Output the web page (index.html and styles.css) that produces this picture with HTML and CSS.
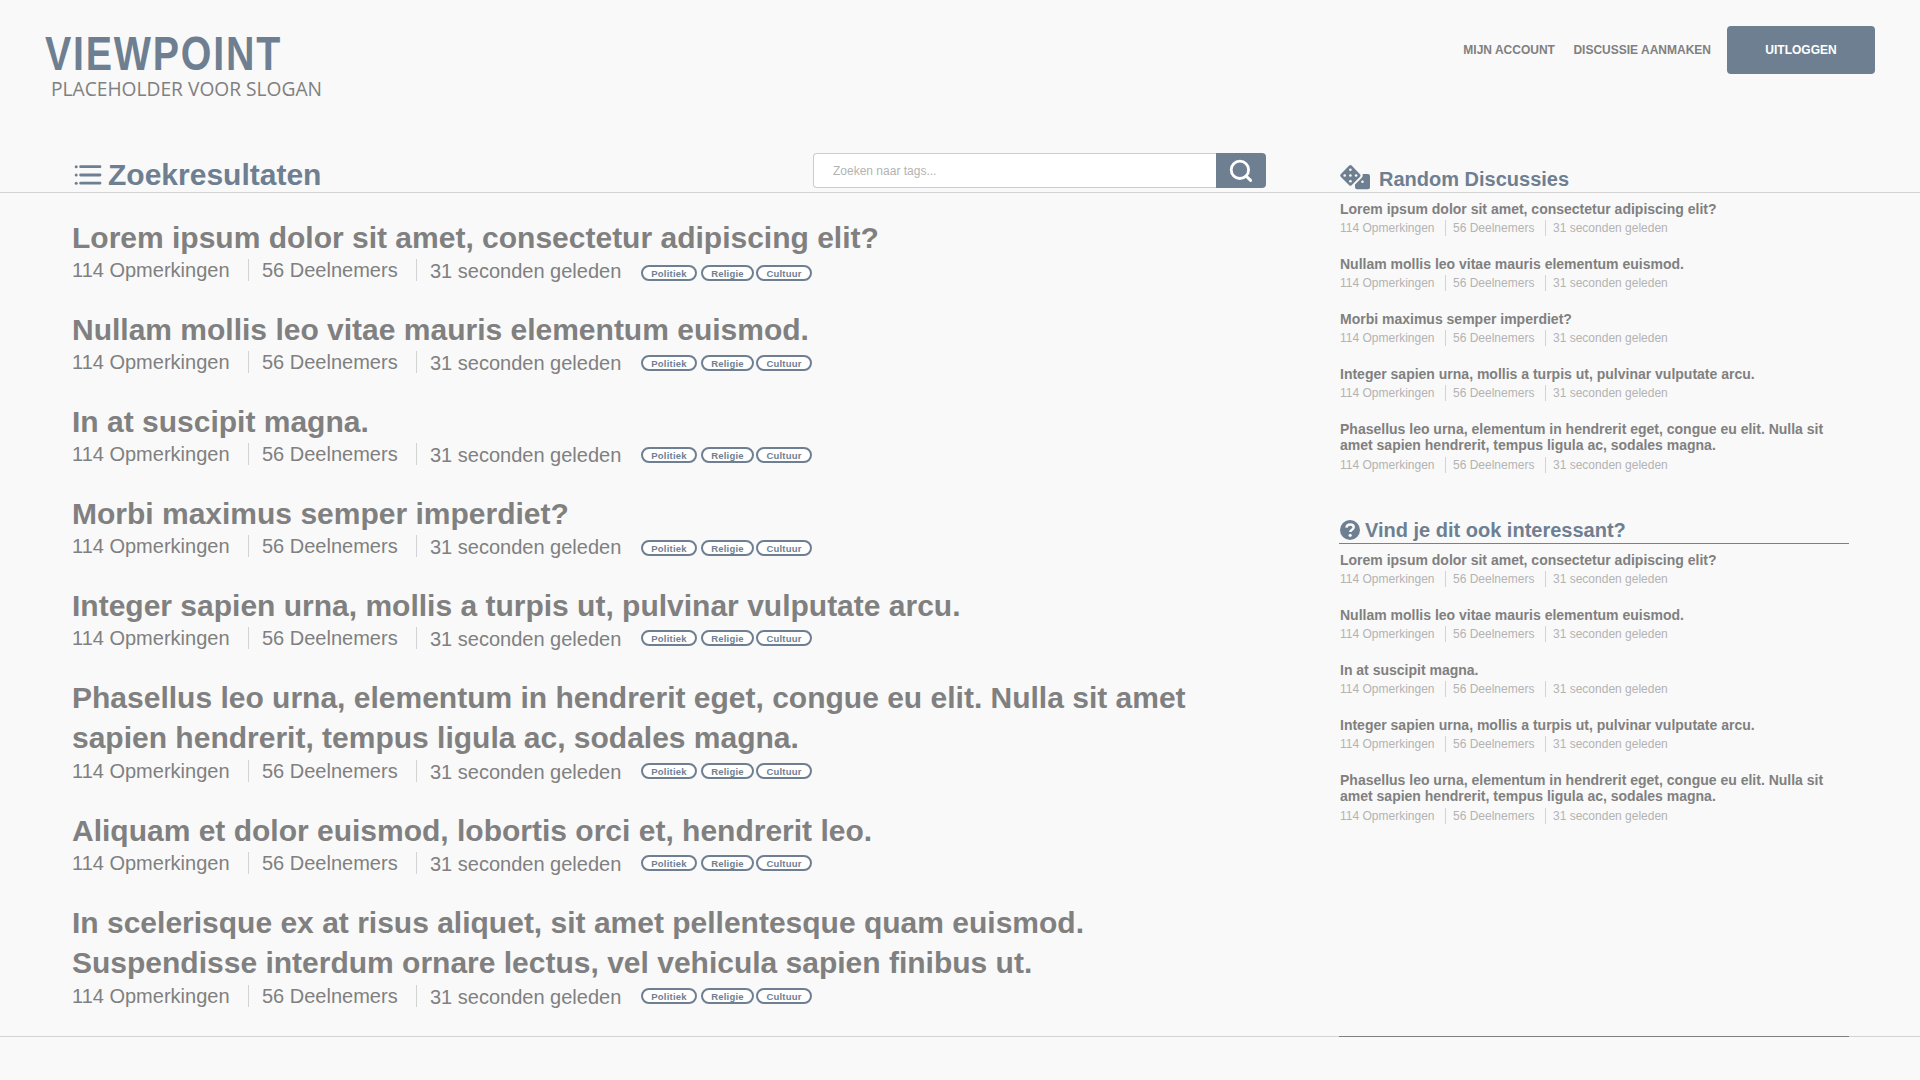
FILE: index.html
```html
<!DOCTYPE html>
<html lang="nl">
<head>
<meta charset="utf-8">
<title>Viewpoint</title>
<link rel="stylesheet" href="styles.css">
</head>
<body>
<header class="header">
  <div class="brand">
    <div class="logo">VIEWPOINT</div>
    <div class="slogan">PLACEHOLDER VOOR SLOGAN</div>
  </div>
  <nav class="nav">
    <a class="nav-link">MIJN ACCOUNT</a>
    <a class="nav-link">DISCUSSIE AANMAKEN</a>
    <a class="button">UITLOGGEN</a>
  </nav>
</header>
<div class="toolbar">
  <h1 class="page-title">
    <svg class="icon-list" viewBox="0 0 28 22" width="28" height="22"><g fill="currentColor"><circle cx="2.200" cy="2.700" r="1.500"/><circle cx="2.200" cy="11" r="1.500"/><circle cx="2.200" cy="19.200" r="1.500"/></g><path d="M6.600 2.700H26M6.600 11H26M6.600 19.200H26" stroke="currentColor" stroke-width="2.800" stroke-linecap="round"/></svg>
    Zoekresultaten
  </h1>
  <div class="search">
    <div class="search-input">Zoeken naar tags...</div>
    <div class="search-button"><svg viewBox="0 0 24 24" width="24" height="24" fill="none" stroke="#fff" stroke-width="2.8" stroke-linecap="round"><circle cx="10.9" cy="10.8" r="8.700"/><path d="M17 17l4.600 4.400" stroke-width="3"/></svg></div>
  </div>
  <h2 class="side-title random-title">
    <svg class="icon-dice" viewBox="0 0 30 25" width="30" height="25"><path fill="currentColor" d="M9.2.6Q10.4-.4 11.600.6L20 9.300Q21 10.500 20 11.700L11.600 20.200Q10.400 21.200 9.200 20.200L.7 11.700Q-.2 10.500.7 9.300ZM22.500 9H28Q30 9 30 11V22.300Q30 24.300 28 24.300H17Q15 24.300 15 22.300V19.600L21.800 12.800Q23.300 11 22.500 9Z"/><g fill="#f9f9f9"><circle cx="10.400" cy="4.800" r="1.300"/><circle cx="4.700" cy="10.500" r="1.300"/><circle cx="10.400" cy="10.500" r="1.300"/><circle cx="16.100" cy="10.500" r="1.300"/><circle cx="10.400" cy="16.200" r="1.300"/><circle cx="22.500" cy="16.700" r="1.300"/></g></svg>
    Random Discussies
  </h2>
</div>
<main class="content">
  <section class="results" id="results"></section>
  <aside class="sidebar">
    <section class="side-list" id="random"></section>
    <h2 class="side-title related-title">
      <svg class="icon-question" viewBox="0 0 20 20" width="20" height="20"><circle cx="10" cy="10" r="10" fill="currentColor"/><path d="M6.400 7.600C6.700 5.400 8.200 4.400 10.200 4.400C12.300 4.400 13.700 5.600 13.700 7.300C13.700 9.800 10.300 9.700 10.300 12" fill="none" stroke="#f9f9f9" stroke-width="2.500"/><circle cx="10.200" cy="15.300" r="1.600" fill="#f9f9f9"/></svg>
      Vind je dit ook interessant?
    </h2>
    <section class="side-list" id="related"></section>
  </aside>
</main>
<script src="script.js"></script>
</body>
</html>
```
FILE: styles.css
```css
* { box-sizing: border-box; }
body {
  margin: 0;
  width: 1920px;
  height: 1080px;
  overflow: hidden;
  background: #f9f9f9;
  color: #808080;
  font-family: "Liberation Sans", Arial, sans-serif;
}
h1, h2, h3 { margin: 0; font-weight: bold; }

.header {
  display: flex;
  justify-content: space-between;
  height: 150px;
  padding: 26px 45px 0;
}
.logo {
  height: 54px;
  color: #6e7f92;
  font-size: 48px;
  line-height: 56px;
  font-weight: bold;
  letter-spacing: 2.2px;
  transform: scaleX(.82);
  transform-origin: 0 0;
  white-space: nowrap;
  width: 0;
}
.slogan {
  padding-left: 6px;
  font-family: "Open Sans", sans-serif;
  font-size: 19.2px;
  line-height: 18px;
  white-space: nowrap;
}
.nav { display: flex; height: 48px; align-items: center; font-size: 12px; font-weight: bold; }
.nav-link { margin-right: 18.5px; }
.nav-link:nth-child(2) { margin-right: 16px; }
.button {
  width: 148px;
  border-radius: 4px;
  background: #6e7f92;
  color: #fff;
  line-height: 48px;
  text-align: center;
}

.toolbar {
  display: grid;
  grid-template-columns: 739px 527px 1fr;
  height: 43px;
  padding-left: 74px;
  border-bottom: 1px solid #d3d3d3;
}
.page-title { display: flex; color: #6e7f92; font-size: 30px; line-height: 50px; gap: 6px; }
.icon-list { margin-top: 14px; }
.search { display: flex; width: 453px; height: 35px; margin-top: 3px; }
.search-input {
  flex: 1;
  padding-left: 19px;
  border: 1px solid #ccc;
  border-right: 0;
  border-radius: 4px 0 0 4px;
  background: #fff;
  color: #b3b3b3;
  font-size: 12px;
  line-height: 34px;
}
.search-button { width: 50px; border-radius: 0 4px 4px 0; background: #6e7f92; padding: 6px 13px; }
.side-title { display: flex; color: #6e7f92; font-size: 20px; }
.random-title { gap: 9px; line-height: 58px; }
.icon-dice { margin-top: 15px; }

.content { display: flex; height: 844px; border-bottom: 1px solid #d3d3d3; }
.results { width: 1339px; padding: 25px 0 0 72px; }
.result { margin-bottom: 20px; }
.result-title { font-size: 30px; line-height: 40px; }
.result-long .result-title { padding-bottom: 1px; }
.meta { display: flex; }
.meta span + span { border-left: 1px solid #d3d3d3; }
.result .meta { height: 32px; font-size: 20px; line-height: 22px; }
.result .meta span { height: 22px; margin-top: 1px; white-space: nowrap; }
.result .meta .comments { width: 176px; }
.result .meta .members { width: 168px; padding-left: 13px; }
.result .meta .time { width: 225px; padding: 1px 0 0 13px; }
.tags { display: flex; }
.tag {
  height: 16px;
  border: 2px solid #6e7f92;
  border-radius: 8px;
  background: #fff;
  color: #6e7f92;
  font-size: 9.5px;
  font-weight: bold;
  line-height: 13px;
  letter-spacing: .2px;
  text-align: center;
}
.tag:nth-child(1) { width: 56px; margin-right: 4px; }
.tag:nth-child(2) { width: 53px; margin-right: 2px; }
.tag:nth-child(3) { width: 56px; }

.sidebar { width: 510px; height: 844px; border-bottom: 1px solid #808080; }
.side-list { padding: 8px 0 0 1px; }
.side-item { height: 35px; margin-bottom: 20px; }
.side-item-long { height: 52px; margin-bottom: 0; }
.side-item-long .side-item-title { padding-bottom: 1px; }
.side-item-title { font-size: 14px; line-height: 16px; }
.side-item .meta { height: 19px; padding-top: 3px; color: #b3b3b3; font-size: 12px; line-height: 17px; }
.side-item .meta span { height: 16px; }
.side-item .comments { width: 105px; }
.side-item .members { width: 100px; padding-left: 7px; }
.side-item .time { padding-left: 7px; }
.related-title { gap: 5px; height: 29px; margin-top: 42px; padding-left: 1px; border-bottom: 1px solid #808080; line-height: 30px; }
.icon-question { margin-top: 5px; }
```
FILE: script.js
```js
const results = [
  ["Lorem ipsum dolor sit amet, consectetur adipiscing elit?", 7],
  ["Nullam mollis leo vitae mauris elementum euismod.", 5],
  ["In at suscipit magna.", 5],
  ["Morbi maximus semper imperdiet?", 6],
  ["Integer sapien urna, mollis a turpis ut, pulvinar vulputate arcu.", 4],
  ["Phasellus leo urna, elementum in hendrerit eget, congue eu elit. Nulla sit amet<br>sapien hendrerit, tempus ligula ac, sodales magna.", 4],
  ["Aliquam et dolor euismod, lobortis orci et, hendrerit leo.", 4],
  ["In scelerisque ex at risus aliquet, sit amet pellentesque quam euismod.<br>Suspendisse interdum ornare lectus, vel vehicula sapien finibus ut.", 4]
];
const long = "Phasellus leo urna, elementum in hendrerit eget, congue eu elit. Nulla sit<br>amet sapien hendrerit, tempus ligula ac, sodales magna.";
const random = [results[0][0], results[1][0], results[3][0], results[4][0], long];
const related = [results[0][0], results[1][0], results[2][0], results[4][0], long];
const stats = '<span class="comments">114 Opmerkingen</span><span class="members">56 Deelnemers</span><span class="time">31 seconden geleden</span>';
const isLong = title => title.includes("<br>");

document.getElementById("results").innerHTML = results.map(([title, offset]) =>
  `<article class="result${isLong(title) ? " result-long" : ""}"><h3 class="result-title">${title}</h3><div class="meta">${stats}<div class="tags" style="margin-top:${offset}px"><b class="tag">Politiek</b><b class="tag">Religie</b><b class="tag">Cultuur</b></div></div></article>`).join("");
const sideItem = title => `<article class="side-item${isLong(title) ? " side-item-long" : ""}"><h3 class="side-item-title">${title}</h3><div class="meta">${stats}</div></article>`;
document.getElementById("random").innerHTML = random.map(sideItem).join("");
document.getElementById("related").innerHTML = related.map(sideItem).join("");
```
